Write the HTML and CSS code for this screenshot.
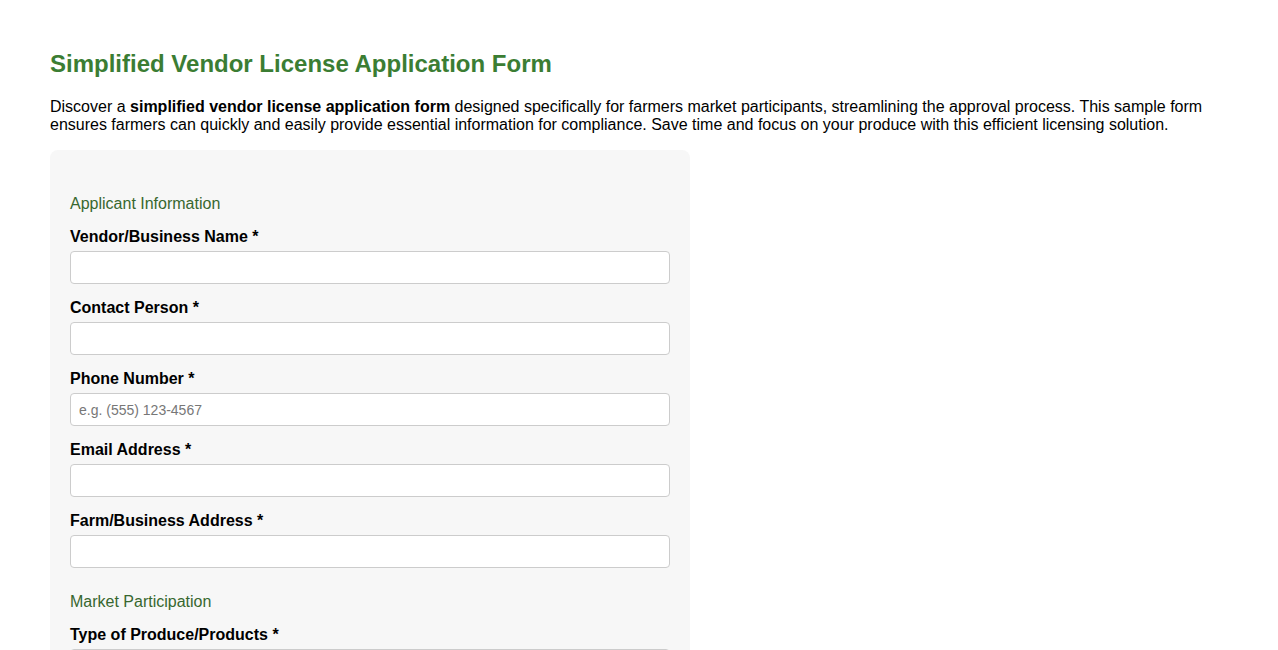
FILE: index.html
```html
<!DOCTYPE html>
<html lang="en">
<head>
    <meta charset="UTF-8">
    <meta name="viewport" content="width=device-width, initial-scale=1.0">
    <title>Simplified Vendor License Application Form</title>
    <link rel="stylesheet" href="styles.css">
</head>
<body>
    <h1>Simplified Vendor License Application Form</h1>
    <p class="intro">Discover a <strong>simplified vendor license application form</strong> designed specifically for farmers market participants, streamlining the approval process. This sample form ensures farmers can quickly and easily provide essential information for compliance. Save time and focus on your produce with this efficient licensing solution.</p>

    <form class="license-form">
        <!-- Applicant -->
        <h3 class="section-title">Applicant Information</h3>
        <div class="field">
            <label for="business">Vendor/Business Name *</label>
            <input type="text" id="business" required>
        </div>
        <div class="field">
            <label for="contact">Contact Person *</label>
            <input type="text" id="contact" required>
        </div>
        <div class="field">
            <label for="phone">Phone Number *</label>
            <input type="tel" id="phone" placeholder="e.g. (555) 123-4567" required>
        </div>
        <div class="field">
            <label for="email">Email Address *</label>
            <input type="email" id="email" required>
        </div>
        <div class="field">
            <label for="address">Farm/Business Address *</label>
            <input type="text" id="address" required>
        </div>

        <!-- Market -->
        <h3 class="section-title">Market Participation</h3>
        <div class="field">
            <label for="products">Type of Produce/Products *</label>
            <input type="text" id="products" required>
        </div>
        <div class="field">
            <label for="days">Market Days Requested *</label>
            <input type="text" id="days" required>
        </div>
    </form>
</body>
</html>
```

FILE: styles.css
```css
body {
    font-family: 'Liberation Sans', Arial, sans-serif;
    margin: 0;
    padding: 50px;
    color: #000;
    background: #fff;
}

h1 {
    font-size: 24px;
    color: #3b7d33;
    margin: 0 0 20px;
}

.intro {
    font-size: 16px;
    line-height: 18px;
    margin: 0 0 16px;
}

/* Form card */
.license-form {
    width: 640px;
    box-sizing: border-box;
    background-color: #f7f7f7;
    border-radius: 8px;
    padding: 20px;
}

.section-title {
    font-size: 16px;
    font-weight: normal;
    color: #37672f;
    margin: 25px 0 15px;
}

.field {
    margin-bottom: 15px;
}

label {
    display: block;
    font-size: 16px;
    font-weight: bold;
    line-height: 18px;
    margin-bottom: 5px;
}

input[type="text"], input[type="tel"], input[type="email"] {
    display: block;
    width: 100%;
    height: 33px;
    box-sizing: border-box;
    padding: 8px;
    border: 1px solid #ccc;
    border-radius: 4px;
    background: #fff;
    font-family: inherit;
    font-size: 14px;
}

input::placeholder {
    color: #777;
}
```
